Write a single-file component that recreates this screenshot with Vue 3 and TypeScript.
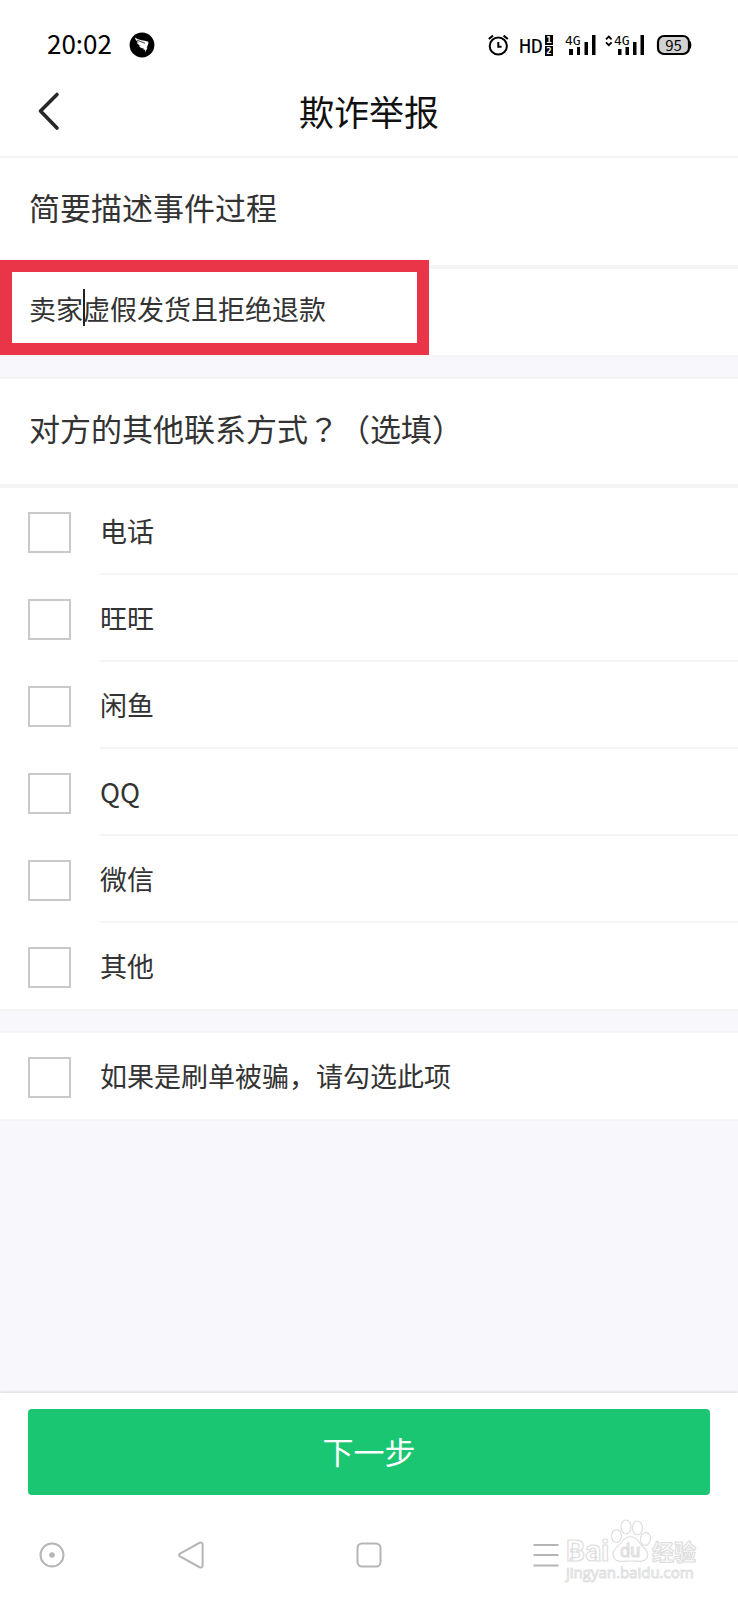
<script setup lang="ts">
import { ref } from 'vue'

interface ContactOption {
  id: string
  label: string
}

const description = ref('卖家虚假发货且拒绝退款')

const options: ContactOption[] = [
  { id: 'phone', label: '电话' },
  { id: 'wangwang', label: '旺旺' },
  { id: 'xianyu', label: '闲鱼' },
  { id: 'qq', label: 'QQ' },
  { id: 'wechat', label: '微信' },
  { id: 'other', label: '其他' },
]

const selected = ref<string[]>([])
const brushing = ref(false)
</script>

<template>
  <div class="page">
    <div class="status">
      <span class="clock">20:02</span>
      <svg class="app-dot" width="26" height="26" viewBox="0 0 26 26" aria-hidden="true">
        <circle cx="13" cy="13" r="12.4" fill="#000" />
        <path d="M6 5.5 C10 8.6 15 8 19.4 9.8 C19.6 12 18.6 14 17.6 15.6 L18.6 15.8 L16 20.4 L16.2 17.8 L14.4 17.8 L14.8 16.6 C12 16.6 10.4 15 9.8 13.6 L12 13.6 C9.4 12.8 8.2 11.6 7.8 10.2 L10 10.4 C7.4 9.2 6.2 7.6 6 5.5 Z" fill="#fff" />
        <path d="M8 8.2 L16 11.2" stroke="#000" stroke-width=".7" />
      </svg>
      <svg class="tray" width="206" height="26" viewBox="486 32 206 26" aria-hidden="true">
        <g fill="none" stroke="#000" stroke-width="2">
          <circle cx="498.3" cy="46" r="8.6" />
          <path d="M488.8 39 L493 35.6 M503.6 35.6 L507.8 39" />
          <path d="M498.3 42 V46.8 H501.6" />
        </g>
        <text x="519" y="53" class="tray-text" font-size="20">HD</text>
        <rect x="545" y="35" width="8" height="10" fill="#000" />
        <rect x="545" y="46" width="8" height="10" fill="#000" />
        <text x="549" y="43" class="tray-text" font-size="9" fill="#fff" text-anchor="middle" font-weight="700">1</text>
        <text x="549" y="54" class="tray-text" font-size="9" fill="#fff" text-anchor="middle" font-weight="700">2</text>
        <text x="565" y="45" class="tray-text" font-size="13">4G</text>
        <path d="M569 49h4v6h-4z M577 47h3v8h-3z M584.5 42h3.5v13h-3.5z M592 35h3.5v20h-3.5z" fill="#000" />
        <path d="M606 39.4 L608.8 36.6 L611.6 39.4 M606 42.4 L608.8 45.2 L611.6 42.4" fill="none" stroke="#000" stroke-width="1.8" />
        <text x="614" y="45" class="tray-text" font-size="13">4G</text>
        <path d="M618 49h3.5v6h-3.5z M625.5 47h3.5v8h-3.5z M633 42h3.5v13h-3.5z M640.5 35h3.5v20h-3.5z" fill="#000" />
        <rect x="658" y="36" width="31" height="18" rx="6" fill="#d2d2d2" stroke="#000" stroke-width="2.2" />
        <path d="M690 41.5 q2 3.5 0 7z" fill="#000" stroke="#000" />
        <text x="673.5" y="50.5" class="level" font-size="15" text-anchor="middle">95</text>
      </svg>
    </div>

    <header class="header">
      <button class="back" type="button" aria-label="返回">
        <svg width="24" height="40" viewBox="0 0 24 40" aria-hidden="true">
          <path d="M20 3.5 L3.5 20 L20 37" fill="none" stroke="#262626" stroke-width="3.6" stroke-linecap="round" stroke-linejoin="round" />
        </svg>
      </button>
      <h1>欺诈举报</h1>
    </header>

    <main class="content">
      <section class="card first">
        <h2><label for="description">简要描述事件过程</label></h2>
        <div class="field">
          <input id="description" v-model="description" type="text" />
          <span class="caret"></span>
          <span class="highlight"></span>
        </div>
      </section>

      <section class="card">
        <h2>对方的其他联系方式<span class="mid-mark">？</span>（选填）</h2>
        <ul class="options">
          <li v-for="option in options" :key="option.id">
            <label class="option">
              <input v-model="selected" type="checkbox" :value="option.id" />
              <span class="option-label">{{ option.label }}</span>
            </label>
          </li>
        </ul>
      </section>

      <section class="card">
        <label class="option single">
          <input v-model="brushing" type="checkbox" />
          <span class="option-label">如果是刷单被骗，请勾选此项</span>
        </label>
      </section>
    </main>

    <footer class="footer">
      <button class="next" type="button">下一步</button>
      <nav class="system">
        <button type="button" aria-label="助手">
          <svg width="28" height="28" viewBox="0 0 28 28" aria-hidden="true">
            <circle cx="14" cy="14" r="11.5" fill="none" stroke="#b5b5b5" stroke-width="2" />
            <circle cx="14" cy="14" r="2.8" fill="#b5b5b5" />
          </svg>
        </button>
        <button type="button" aria-label="后退">
          <svg width="28" height="28" viewBox="0 0 28 28" aria-hidden="true">
            <path d="M3 12.6 L22.6 1.8 Q25.6 1 25.6 3.6 V24.4 Q25.6 27 22.6 26.2 L3 15.4 Q1.2 14 3 12.6 Z" fill="none" stroke="#b5b5b5" stroke-width="2" />
          </svg>
        </button>
        <button type="button" aria-label="主页">
          <svg width="28" height="28" viewBox="0 0 28 28" aria-hidden="true">
            <rect x="2.5" y="2.5" width="23" height="23" rx="4.5" fill="none" stroke="#b5b5b5" stroke-width="2" />
          </svg>
        </button>
        <button type="button" aria-label="菜单">
          <svg width="28" height="28" viewBox="0 0 28 28" aria-hidden="true">
            <path d="M1.5 4 H26.5 M1.5 14 H26.5 M1.5 24.5 H26.5" stroke="#b5b5b5" stroke-width="2" />
          </svg>
        </button>
      </nav>
      <svg class="watermark" width="136" height="66" viewBox="0 0 136 66" aria-hidden="true">
        <g fill="#fff" stroke="#dedede" stroke-width="1.2">
          <text x="2" y="43" class="mark" font-size="30" font-weight="700">Bai</text>
          <ellipse cx="52.5" cy="18" rx="5" ry="6.4" />
          <ellipse cx="62" cy="9" rx="5" ry="7" />
          <ellipse cx="73.5" cy="10" rx="5" ry="7" />
          <ellipse cx="81.5" cy="21" rx="5" ry="6.4" transform="rotate(8 81.5 21)" />
          <path d="M50 40 C46 32 54 29 58 24 C62 17 71 17 75 24 C79 30 86 33 83 40 C80 45 73 43 66 43 C60 43 53 45 50 40 Z" />
          <text x="56" y="39" class="mark" font-size="18">du</text>
          <text x="88" y="42" class="mark-cn" font-size="22" font-weight="700">经验</text>
          <text x="2" y="60" class="url" font-size="15" stroke-width=".9">jingyan.baidu.com</text>
        </g>
      </svg>
    </footer>
  </div>
</template>

<style>
body {
  margin: 0;
  background: #fff;
}
</style>

<style scoped>
.page {
  display: flex;
  flex-direction: column;
  min-height: 100vh;
  background: #f8f8fc;
  color: #333;
  font-family: "Noto Sans CJK SC", "Noto Sans", sans-serif;
}

button {
  border: 0;
  padding: 0;
  background: none;
  font: inherit;
  color: inherit;
}

svg {
  display: block;
}

.status {
  display: flex;
  align-items: center;
  height: 50px;
  padding: 20px 46px 0 47px;
  background: #fff;
  color: #000;
}

.clock {
  padding-bottom: 4px;
  font-size: 26px;
  line-height: 30px;
}

.app-dot {
  margin-left: 17px;
}

.tray {
  margin-left: auto;
}

.tray-text {
  font-family: "DejaVu Sans Mono", monospace;
}

.level {
  font-family: "Noto Sans CJK SC", sans-serif;
}

.header {
  display: grid;
  grid-template-columns: 61px 1fr 61px;
  align-items: center;
  height: 86px;
  border-bottom: 2px solid #f3f3f3;
  background: #fff;
}

.back {
  justify-self: end;
  margin-bottom: 4px;
}

h1 {
  margin: 0;
  padding-bottom: 4px;
  font-size: 35px;
  line-height: 50px;
  font-weight: 400;
  text-align: center;
  color: #111;
}

.content {
  flex: 1;
  display: flex;
  flex-direction: column;
  gap: 20px;
}

.card {
  border-top: 2px solid #f4f4f4;
  border-bottom: 2px solid #f4f4f4;
  background: #fff;
}

h2 {
  margin: 0;
  padding: 26px 29px 33px;
  border-bottom: 4px solid #f4f4f4;
  font-size: 31px;
  line-height: 46px;
  font-weight: 400;
}

.first {
  border-top: 0;
}

.first h2 {
  padding-bottom: 35px;
}

.mid-mark {
  font-family: "Noto Sans CJK TC", sans-serif;
}

.field {
  position: relative;
}

.field input {
  display: block;
  box-sizing: border-box;
  width: 100%;
  height: 86px;
  padding: 0 29px 8px;
  border: 0;
  outline: 0;
  background: none;
  color: #333;
  font: inherit;
  font-size: 27px;
}

.caret {
  position: absolute;
  left: 83px;
  top: 20px;
  width: 2px;
  height: 37px;
  background: #222;
}

.highlight {
  position: absolute;
  inset: -9px auto 0 0;
  box-sizing: border-box;
  width: 429px;
  border: 12px solid #ea3447;
  pointer-events: none;
}

.options {
  margin: 0;
  padding: 0;
  list-style: none;
}

.option {
  display: flex;
  gap: 29px;
  padding-left: 28px;
}

.option input {
  appearance: none;
  box-sizing: border-box;
  width: 43px;
  height: 41px;
  margin: 24px 0 21px;
  border: 2px solid #c9c9c9;
  border-radius: 0;
  background: #fff;
}

.option input:checked {
  background: #1bc672;
}

.option-label {
  flex: 1;
  padding: 22px 0 21px;
  border-bottom: 2px solid #f4f4f4;
  font-size: 27px;
  line-height: 42px;
}

li:last-child .option-label,
.single .option-label {
  border-bottom: 0;
}

.footer {
  position: relative;
  padding-top: 16px;
  background: #fff;
  box-shadow: 0 -1px 3px #d8d8dc;
}

.next {
  display: block;
  width: calc(100% - 56px);
  height: 86px;
  margin: 0 28px;
  padding-bottom: 3px;
  border-radius: 4px;
  background: #1bc672;
  color: #fff;
  font-size: 31px;
}

.system {
  display: grid;
  grid-template-columns: 104fr 174fr 182fr 172fr 106fr;
  justify-items: center;
  padding: 46px 0 31px;
}

.watermark {
  position: absolute;
  right: 38px;
  bottom: 16px;
}

.mark {
  font-family: Roboto, "Liberation Sans", sans-serif;
}

.mark-cn {
  font-family: "Noto Sans CJK SC", sans-serif;
}

.url {
  font-family: "Open Sans", "Noto Sans", sans-serif;
}
</style>
